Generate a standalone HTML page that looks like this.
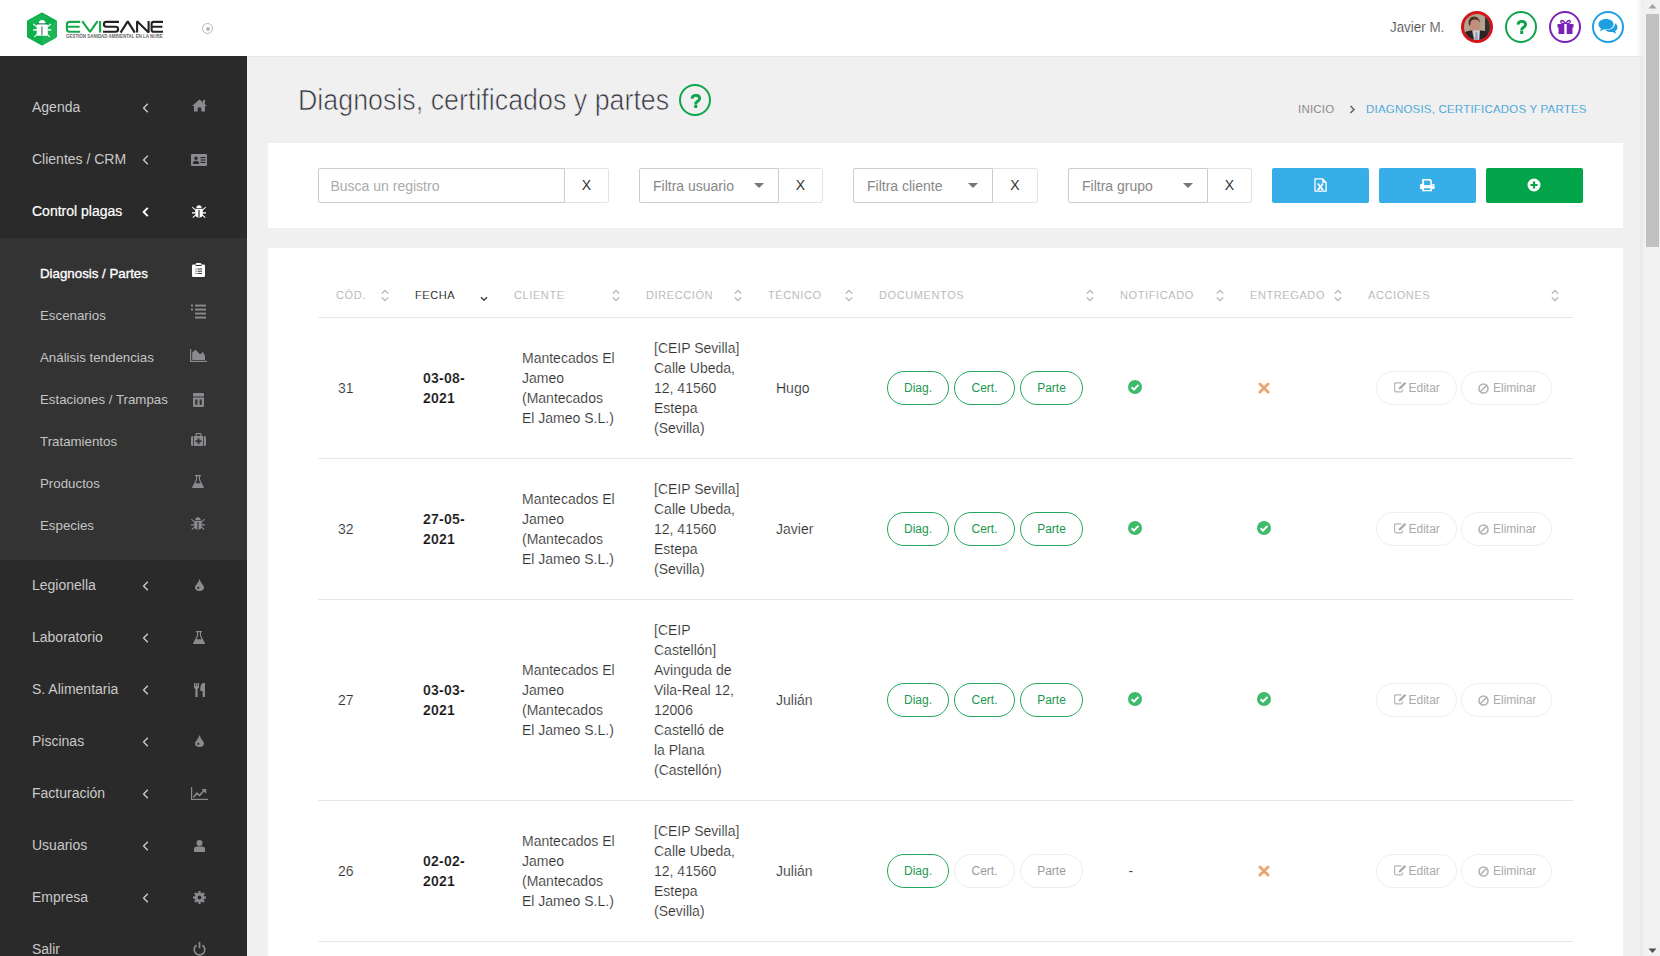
<!DOCTYPE html>
<html><head><meta charset="utf-8">
<style>
*{margin:0;padding:0;box-sizing:border-box}
html,body{width:1660px;height:956px;overflow:hidden;background:#f0f0f0;font-family:"Liberation Sans",sans-serif}
.a{position:absolute}
.nw{white-space:nowrap}
#header{position:absolute;left:0;top:0;width:1643px;height:56px;background:#fff}
#sidebar{position:absolute;left:0;top:56px;width:247px;height:900px;background:#2a2a2a}
#sub{position:absolute;left:0;top:182px;width:247px;height:322px;background:#333}
.mi{position:absolute;left:32px;height:52px;line-height:53px;font-size:14px;color:#c9c9c9;white-space:nowrap}
.mi.act{color:#fff;-webkit-text-stroke:0.2px #fff}
.chev{position:absolute;left:142px;width:8px;height:10px}
.ico{position:absolute;fill:#8b8a8f}
.si{position:absolute;left:40px;height:42px;line-height:44px;font-size:13.3px;color:#c4c4c4;white-space:nowrap}
.si.act{color:#fff;-webkit-text-stroke:0.35px #fff}
.panel{position:absolute;background:#fff}
.inp{position:absolute;top:168px;height:35px;border:1px solid #ccc;border-radius:2px 0 0 2px;background:#fff;font-size:14px;color:#ababab;line-height:35px;white-space:nowrap}
.xb{position:absolute;top:168px;height:35px;border:1px solid #e3e3e3;border-left:none;border-radius:0 3px 3px 0;background:#fff;font-size:14px;color:#333;text-align:center;line-height:33px}
.caret{position:absolute;top:13.5px;width:0;height:0;border-left:5px solid transparent;border-right:5px solid transparent;border-top:5px solid #777}
.btn{position:absolute;top:168px;height:35px;border-radius:2px}
.th{position:absolute;top:288px;font-size:11px;letter-spacing:0.6px;color:#a5a5a5;-webkit-text-stroke:0.2px #fff;white-space:nowrap;line-height:14px}
.sort{position:absolute;top:288px;width:8px;height:13px}
.hl{position:absolute;left:318px;width:1255px;height:1px;background:#e6e6e6}
.td{position:absolute;font-size:14px;line-height:20px;color:#333;white-space:nowrap;-webkit-text-stroke:0.15px #fff}
.addr{letter-spacing:0px}
.b{font-weight:bold;color:#111;-webkit-text-stroke:0.2px #fff;letter-spacing:0.25px}
.dbtn{position:absolute;height:34px;border:1.5px solid #22a85a;border-radius:17px;font-size:12px;color:#1a9a50;text-align:center;line-height:33px;background:#fff}
.dbtn.off{border:1px solid #ececec;color:#9a9a9a;line-height:33px}
.abtn{position:absolute;height:34px;border:1px solid #efefef;border-radius:17px;font-size:12px;color:#aaa;line-height:32px;white-space:nowrap}
</style></head><body>

<!-- HEADER -->
<div id="header">
  <!-- logo -->
  <svg class="a" style="left:26px;top:12px" width="32" height="34" viewBox="0 0 32 34">
    <polygon points="16,2 29.5,9.5 29.5,24.5 16,32 2.5,24.5 2.5,9.5" fill="#0fb04c" stroke="#0fb04c" stroke-width="3" stroke-linejoin="round"/>
    <polygon points="16,17 29.5,9.5 31,10 31,24.5 16,33" fill="#2fbd68" opacity="0.45"/>
    <polygon points="2.5,9.5 16,2 22,5.5 9,13 " fill="#1dbb5e" opacity="0.5"/>
    <g fill="#fff">
      <path d="M12.7 11.5 Q12.9 7.9 16.1 7.9 Q19.4 7.9 19.6 11.5 Z"/>
      <rect x="10.7" y="12.2" width="11.1" height="11.6" rx="1.2"/>
      <rect x="7.1" y="17.2" width="4" height="1.4"/>
      <rect x="21.2" y="17.2" width="4" height="1.4"/>
      <path d="M7.6 11.6 L11.4 14.6 L10.8 15.5 L7 12.5 Z"/>
      <path d="M24.6 11.6 L20.8 14.6 L21.4 15.5 L25.2 12.5 Z"/>
      <path d="M8 24.4 L11.3 21.6 L11.9 22.5 L8.7 25.2 Z"/>
      <path d="M24.2 24.4 L20.9 21.6 L20.3 22.5 L23.5 25.2 Z"/>
    </g>
    <rect x="10.7" y="11.5" width="11.1" height="0.8" fill="#333" opacity="0.7"/>
    <rect x="15.1" y="14.3" width="1.6" height="9.1" fill="#7f9d86"/>
  </svg>
  <svg class="a" style="left:60px;top:15px" width="110" height="27" viewBox="60 15 110 27">
    <g fill="none" stroke-width="2.1" stroke-linejoin="bevel">
      <path stroke="#17a84a" d="M80.2 21.9 H69.6 Q66.9 21.9 66.9 24.6 V29 Q66.9 31.7 69.6 31.7 H80.2 M66.9 26.8 H79.6"/>
      <path stroke="#17a84a" d="M82.2 21.2 L90 31.8 L97.6 21.2"/>
      <path stroke="#17a84a" d="M100.1 21 V32.6"/>
      <path stroke="#222" d="M119 21.9 H106.4 Q103.9 21.9 103.9 24.3 Q103.9 26.8 106.4 26.8 H115.6 Q118.1 26.8 118.1 29.2 Q118.1 31.7 115.6 31.7 H103"/>
      <path stroke="#222" d="M120.6 32.6 L127.7 21.4 L134.8 32.6"/>
      <path stroke="#222" d="M137.1 32.6 V21.2 L148.6 32.4 V21"/>
      <path stroke="#222" d="M163 21.9 H153.4 Q151.6 21.9 151.6 24.2 V29.4 Q151.6 31.7 153.4 31.7 H163 M151.6 26.8 H162.4"/>
    </g>
  </svg>
  <div class="a nw" style="left:66px;top:35.1px;font-size:4.9px;line-height:4.9px;color:#666;font-weight:bold;transform:scaleX(0.91);transform-origin:left">GESTIÓN SANIDAD AMBIENTAL EN LA NUBE</div>
  <!-- small toggle circle -->
  <div class="a" style="left:202px;top:23px;width:11px;height:11px;border:1.6px solid #b5b5b5;border-radius:50%"></div>
  <div class="a" style="left:205.5px;top:26.5px;width:4px;height:4px;background:#b5b5b5;border-radius:50%"></div>

  <div class="a nw" style="left:1390px;top:17px;font-size:14px;line-height:20px;color:#444;-webkit-text-stroke:0.2px #fff;transform:scaleX(0.955);transform-origin:left">Javier M.</div>
  <!-- avatar -->
  <div class="a" style="left:1461px;top:11px;width:32px;height:32px;border-radius:50%;background:#d3151b"></div>
  <svg class="a" style="left:1464px;top:14px" width="26" height="26" viewBox="0 0 26 26">
    <defs><clipPath id="cav"><circle cx="13" cy="13" r="13"/></clipPath></defs>
    <g clip-path="url(#cav)">
      <rect width="26" height="26" fill="#b3a48d"/>
      <rect x="21" y="2" width="5" height="24" fill="#35302f"/>
      <ellipse cx="10.5" cy="11.5" rx="5.2" ry="6.8" fill="#c58d7f"/>
      <path d="M4.5 10 Q4.5 2 10.5 2.5 Q15.5 3 16 9 L14.5 6.5 Q11 4.5 7 7 L6 12 Z" fill="#4e3328"/>
      <path d="M0 26 V19 Q3 16 8 16.5 L10 26 Z" fill="#2c2222"/>
      <path d="M15.5 16.5 Q20 16 23 18 L26 26 H15 Z" fill="#2c2222"/>
      <path d="M9 16.5 L10.5 26 H15.2 L15.8 16.5 Z" fill="#d0d3da"/>
      <path d="M11.6 18 L13.2 18 L13.8 26 H11 Z" fill="#8d9cb8"/>
    </g>
  </svg>
  <!-- help -->
  <div class="a" style="left:1505px;top:11px;width:32px;height:32px;border:2px solid #0da44a;border-radius:50%"></div>
  <svg class="a" style="left:1516px;top:20px" width="11" height="14" viewBox="0 0 11 14"><path d="M2 4.7 C2.3 2.2 3.8 1.4 5.8 1.4 C8.1 1.4 9.6 2.6 9.6 4.5 C9.6 6.3 8.2 7 7 7.8 C6.1 8.4 5.7 9 5.7 10.2" fill="none" stroke="#0da44a" stroke-width="2.9"/><rect x="4.25" y="10.6" width="2.95" height="3.4" fill="#0da44a"/></svg>
  <!-- gift -->
  <div class="a" style="left:1549px;top:11px;width:32px;height:32px;border:2px solid #7a22b8;border-radius:50%"></div>
  <svg class="a" style="left:1557px;top:19px" width="17" height="16" viewBox="0 0 17 16">
    <g fill="#7a22b8">
      <rect x="0.5" y="5" width="16" height="3.5"/>
      <rect x="1.5" y="8" width="14" height="7"/>
      <path d="M8.5 5 C6 0 3 1 4 3.5 C4.5 4.5 6 5 8.5 5 Z M8.5 5 C11 0 14 1 13 3.5 C12.5 4.5 11 5 8.5 5 Z" fill="none" stroke="#7a22b8" stroke-width="1.4"/>
    </g>
    <rect x="7.3" y="5" width="2.4" height="10" fill="#fff"/>
  </svg>
  <!-- chat -->
  <div class="a" style="left:1592px;top:11px;width:32px;height:32px;border:2px solid #1e9fe0;border-radius:50%"></div>
  <svg class="a" style="left:1598px;top:18px" width="20" height="18" viewBox="0 0 20 18">
    <path d="M8 1 C12.5 1 15.5 3.3 15.5 6.3 C15.5 9.3 12.5 11.6 8 11.6 C7 11.6 6.2 11.5 5.5 11.3 L2 13.5 L3 10.5 C1.3 9.5 0.5 8 0.5 6.3 C0.5 3.3 3.5 1 8 1 Z" fill="#1e9fe0"/>
    <path d="M16.8 5.2 C18.6 6.2 19.5 7.6 19.5 9.2 C19.5 10.8 18.7 12.1 17.2 13 L18 15.8 L14.8 13.9 C14.1 14.1 13.5 14.1 12.8 14.1 C10.5 14.1 8.7 13.4 7.5 12.3 C12.8 12.3 16.8 9.5 16.8 6.3 Z" fill="#1e9fe0"/>
  </svg>
</div>
<!-- header shadow near scrollbar -->
<div class="a" style="left:1636px;top:0;width:7px;height:56px;background:linear-gradient(to right,rgba(240,240,240,0),#ededed)"></div>

<div class="a" style="left:247px;top:56px;width:1396px;height:1px;background:#e7e7e7"></div>
<!-- SIDEBAR -->
<div id="sidebar"></div>
<div class="a" style="left:0;top:238px;width:247px;height:322px;background:#333"></div>

<div id="menu"><div class="mi" style="top:81px">Agenda</div>
<svg class="a" style="left:142px;top:102.7px" width="7" height="10" viewBox="0 0 7 10"><path d="M5.8 0.8 L1.6 5 L5.8 9.2" fill="none" stroke="#c9c9c9" stroke-width="1.4"/></svg>
<svg class="a" style="left:191.5px;top:99.0px" width="15" height="13" viewBox="0 0 15 13" fill="#8b8a8f"><path d="M7.5 0.5 L15 7 L13 7 L13 12.5 L9.3 12.5 L9.3 8.5 L5.7 8.5 L5.7 12.5 L2 12.5 L2 7 L0 7 Z"/><rect x="11" y="1" width="2" height="3.5"/></svg>
<div class="mi" style="top:133px">Clientes / CRM</div>
<svg class="a" style="left:142px;top:154.7px" width="7" height="10" viewBox="0 0 7 10"><path d="M5.8 0.8 L1.6 5 L5.8 9.2" fill="none" stroke="#c9c9c9" stroke-width="1.4"/></svg>
<svg class="a" style="left:191.0px;top:154.0px" width="16" height="12" viewBox="0 0 16 12" fill="#8b8a8f"><path d="M1 0 H15 Q16 0 16 1 V11 Q16 12 15 12 H1 Q0 12 0 11 V1 Q0 0 1 0 Z"/><g fill="#2a2a2a"><circle cx="5" cy="4.3" r="1.8"/><path d="M1.8 10 Q1.8 6.8 5 6.8 Q8.2 6.8 8.2 10 Z"/><rect x="9.5" y="3" width="5" height="1.2"/><rect x="9.5" y="5.4" width="5" height="1.2"/><rect x="9.5" y="7.8" width="5" height="1.2"/></g></svg>
<div class="mi act" style="top:185px">Control plagas</div>
<svg class="a" style="left:142px;top:206.7px" width="7" height="10" viewBox="0 0 7 10"><path d="M5.8 0.8 L1.6 5 L5.8 9.2" fill="none" stroke="#fff" stroke-width="1.9"/></svg>
<svg class="a" style="left:192.0px;top:204.5px" width="14" height="13" viewBox="0 0 14 13" fill="#fff"><path d="M4.3 3 Q4.5 0.3 7 0.3 Q9.5 0.3 9.7 3 Z"/><path d="M3.2 3.8 H10.8 V9 Q10.8 12.6 7 12.6 Q3.2 12.6 3.2 9 Z"/><path d="M0.6 1.8 L3.6 4.4 L3 5.2 L0 2.6 Z M13.4 1.8 L10.4 4.4 L11 5.2 L14 2.6 Z"/><rect x="0" y="7.2" width="3.4" height="1.3"/><rect x="10.6" y="7.2" width="3.4" height="1.3"/><path d="M0.4 12.2 L3.4 9.6 L4 10.4 L1 13 Z M13.6 12.2 L10.6 9.6 L10 10.4 L13 13 Z"/><rect x="6.4" y="5" width="1.2" height="7" fill="#2a2a2a"/></svg>
<div class="mi" style="top:559px">Legionella</div>
<svg class="a" style="left:142px;top:580.7px" width="7" height="10" viewBox="0 0 7 10"><path d="M5.8 0.8 L1.6 5 L5.8 9.2" fill="none" stroke="#c9c9c9" stroke-width="1.4"/></svg>
<svg class="a" style="left:194.5px;top:579.0px" width="9" height="12" viewBox="0 0 9 12" fill="#8b8a8f"><path d="M4.5 0 Q5.5 3 7.5 5.5 Q9 7.3 9 8.2 Q9 12 4.5 12 Q0 12 0 8.2 Q0 7.3 1.5 5.5 Q3.5 3 4.5 0 Z"/><circle cx="3.3" cy="8.8" r="1.1" fill="#2a2a2a"/></svg>
<div class="mi" style="top:611px">Laboratorio</div>
<svg class="a" style="left:142px;top:632.7px" width="7" height="10" viewBox="0 0 7 10"><path d="M5.8 0.8 L1.6 5 L5.8 9.2" fill="none" stroke="#c9c9c9" stroke-width="1.4"/></svg>
<svg class="a" style="left:193.0px;top:630.5px" width="12" height="13" viewBox="0 0 12 13" fill="#8b8a8f"><rect x="3" y="0" width="6" height="1.3"/><path d="M4 1 H8 V4.5 L12 12.5 Q12 13 11.5 13 H0.5 Q0 13 0 12.5 L4 4.5 Z"/><path d="M5.1 1.3 H6.9 V4.8 L8.6 8.2 H3.4 L5.1 4.8 Z" fill="#2a2a2a"/></svg>
<div class="mi" style="top:663px">S. Alimentaria</div>
<svg class="a" style="left:142px;top:684.7px" width="7" height="10" viewBox="0 0 7 10"><path d="M5.8 0.8 L1.6 5 L5.8 9.2" fill="none" stroke="#c9c9c9" stroke-width="1.4"/></svg>
<svg class="a" style="left:193.5px;top:683.0px" width="11" height="14" viewBox="0 0 11 14" fill="#8b8a8f"><path d="M0 0 H5 V4 Q5 5.5 3.6 6 V14 H1.4 V6 Q0 5.5 0 4 Z"/><path d="M6.3 6 Q6.3 1 9 0 H11 V14 H8.6 V8 H6.3 Z"/><g fill="#2a2a2a"><rect x="1.5" y="0" width="0.6" height="3"/><rect x="2.9" y="0" width="0.6" height="3"/></g></svg>
<div class="mi" style="top:715px">Piscinas</div>
<svg class="a" style="left:142px;top:736.7px" width="7" height="10" viewBox="0 0 7 10"><path d="M5.8 0.8 L1.6 5 L5.8 9.2" fill="none" stroke="#c9c9c9" stroke-width="1.4"/></svg>
<svg class="a" style="left:194.5px;top:735.0px" width="9" height="12" viewBox="0 0 9 12" fill="#8b8a8f"><path d="M4.5 0 Q5.5 3 7.5 5.5 Q9 7.3 9 8.2 Q9 12 4.5 12 Q0 12 0 8.2 Q0 7.3 1.5 5.5 Q3.5 3 4.5 0 Z"/><circle cx="3.3" cy="8.8" r="1.1" fill="#2a2a2a"/></svg>
<div class="mi" style="top:767px">Facturación</div>
<svg class="a" style="left:142px;top:788.7px" width="7" height="10" viewBox="0 0 7 10"><path d="M5.8 0.8 L1.6 5 L5.8 9.2" fill="none" stroke="#c9c9c9" stroke-width="1.4"/></svg>
<svg class="a" style="left:190.5px;top:786.5px" width="17" height="13" viewBox="0 0 17 13" fill="#8b8a8f"><rect x="0" y="0" width="1.2" height="13"/><rect x="0" y="11.8" width="17" height="1.2"/><path d="M2.5 10.2 L6 6.2 L8.5 8.5 L13 3.5" fill="none" stroke="#8b8a8f" stroke-width="1.6"/><path d="M10.5 2 H15.2 V6.7 Z"/></svg>
<div class="mi" style="top:819px">Usuarios</div>
<svg class="a" style="left:142px;top:840.7px" width="7" height="10" viewBox="0 0 7 10"><path d="M5.8 0.8 L1.6 5 L5.8 9.2" fill="none" stroke="#c9c9c9" stroke-width="1.4"/></svg>
<svg class="a" style="left:193.5px;top:840.0px" width="11" height="12" viewBox="0 0 11 12" fill="#8b8a8f"><circle cx="5.5" cy="3" r="3"/><path d="M0 12 V9 Q0 6.5 2.8 6.5 H8.2 Q11 6.5 11 9 V12 Z"/></svg>
<div class="mi" style="top:871px">Empresa</div>
<svg class="a" style="left:142px;top:892.7px" width="7" height="10" viewBox="0 0 7 10"><path d="M5.8 0.8 L1.6 5 L5.8 9.2" fill="none" stroke="#c9c9c9" stroke-width="1.4"/></svg>
<svg class="a" style="left:192.5px;top:890.5px" width="13" height="13" viewBox="0 0 13 13" fill="#8b8a8f"><circle cx="6.5" cy="6.5" r="4.8"/><rect x="5.4" y="0" width="2.2" height="3" transform="rotate(0 6.5 6.5)"/><rect x="5.4" y="0" width="2.2" height="3" transform="rotate(45 6.5 6.5)"/><rect x="5.4" y="0" width="2.2" height="3" transform="rotate(90 6.5 6.5)"/><rect x="5.4" y="0" width="2.2" height="3" transform="rotate(135 6.5 6.5)"/><rect x="5.4" y="0" width="2.2" height="3" transform="rotate(180 6.5 6.5)"/><rect x="5.4" y="0" width="2.2" height="3" transform="rotate(225 6.5 6.5)"/><rect x="5.4" y="0" width="2.2" height="3" transform="rotate(270 6.5 6.5)"/><rect x="5.4" y="0" width="2.2" height="3" transform="rotate(315 6.5 6.5)"/><circle cx="6.5" cy="6.5" r="1.9" fill="#2a2a2a"/></svg>
<div class="mi" style="top:923px">Salir</div>
<svg class="a" style="left:192.5px;top:942.0px" width="13" height="14" viewBox="0 0 13 14" fill="#8b8a8f"><path d="M3.6 3.2 A5.3 5.3 0 1 0 9.4 3.2" fill="none" stroke="#8b8a8f" stroke-width="1.7"/><rect x="5.65" y="0" width="1.7" height="6.3"/></svg>
<div class="si act" style="top:252px">Diagnosis / Partes</div>
<svg class="a" style="left:191.5px;top:262.9px" width="13" height="14" viewBox="0 0 13 14" fill="#fff"><rect x="0" y="1.5" width="13" height="12.5" rx="1.3"/><rect x="3.8" y="0" width="5.4" height="2.8" rx="1" fill="#fff"/><g fill="#333"><rect x="3.5" y="1.9" width="6" height="1.1"/><rect x="3.5" y="5.5" width="1" height="1"/><rect x="5.5" y="5.5" width="4.5" height="1"/><rect x="3.5" y="7.7" width="1" height="1"/><rect x="5.5" y="7.7" width="4.5" height="1"/><rect x="3.5" y="9.9" width="1" height="1"/><rect x="5.5" y="9.9" width="4.5" height="1"/></g></svg>
<div class="si" style="top:294px">Escenarios</div>
<svg class="a" style="left:190.5px;top:304.0px" width="15" height="15" viewBox="0 0 15 15" fill="#8b8a8f"><rect x="0" y="0.5" width="2" height="2"/><rect x="0" y="4.5" width="2" height="2"/><rect x="4" y="0.6" width="11" height="1.9"/><rect x="4" y="4.6" width="11" height="1.9"/><rect x="4" y="8.6" width="11" height="1.9"/><rect x="4" y="12.6" width="11" height="1.9"/></svg>
<div class="si" style="top:336px">Análisis tendencias</div>
<svg class="a" style="left:189.5px;top:349.0px" width="17" height="13" viewBox="0 0 17 13" fill="#8b8a8f"><rect x="0" y="0" width="1.2" height="13"/><rect x="0" y="11.8" width="17" height="1.2"/><path d="M2.2 11 V3.5 L5.5 0.8 L10 5.2 L13 3 L15 7 V11 Z"/></svg>
<div class="si" style="top:378px">Estaciones / Trampas</div>
<svg class="a" style="left:192.5px;top:392.9px" width="11" height="14" viewBox="0 0 11 14" fill="#8b8a8f"><rect x="0" y="0" width="11" height="3.4" rx="1"/><path d="M0 4.5 H11 V13 Q11 14 10 14 H1 Q0 14 0 13 Z"/><g fill="#333"><rect x="2.2" y="6.5" width="2.2" height="5.3"/><rect x="6.6" y="6.5" width="2.2" height="5.3"/></g></svg>
<div class="si" style="top:420px">Tratamientos</div>
<svg class="a" style="left:190.5px;top:433.0px" width="15" height="13" viewBox="0 0 15 13" fill="#8b8a8f"><path d="M4.5 3 V1.2 Q4.5 0 5.7 0 H9.3 Q10.5 0 10.5 1.2 V3 H9.3 V1.2 H5.7 V3 Z"/><path d="M1.5 3 H13.5 Q15 3 15 4.5 V11.5 Q15 13 13.5 13 H1.5 Q0 13 0 11.5 V4.5 Q0 3 1.5 3 Z"/><g fill="#333"><rect x="2.2" y="3" width="0.8" height="10"/><rect x="12" y="3" width="0.8" height="10"/><rect x="6.6" y="5.2" width="1.8" height="6"/><rect x="4.5" y="7.3" width="6" height="1.8"/></g></svg>
<div class="si" style="top:462px">Productos</div>
<svg class="a" style="left:192.0px;top:475.0px" width="12" height="13" viewBox="0 0 12 13" fill="#8b8a8f"><rect x="3" y="0" width="6" height="1.3"/><path d="M4 1 H8 V4.5 L12 12.5 Q12 13 11.5 13 H0.5 Q0 13 0 12.5 L4 4.5 Z"/><path d="M5.1 1.3 H6.9 V4.8 L8.6 8.2 H3.4 L5.1 4.8 Z" fill="#333"/></svg>
<div class="si" style="top:504px">Especies</div>
<svg class="a" style="left:191.0px;top:516.5px" width="14" height="13" viewBox="0 0 14 13" fill="#8b8a8f"><path d="M4.3 3 Q4.5 0.3 7 0.3 Q9.5 0.3 9.7 3 Z"/><path d="M3.2 3.8 H10.8 V9 Q10.8 12.6 7 12.6 Q3.2 12.6 3.2 9 Z"/><path d="M0.6 1.8 L3.6 4.4 L3 5.2 L0 2.6 Z M13.4 1.8 L10.4 4.4 L11 5.2 L14 2.6 Z"/><rect x="0" y="7.2" width="3.4" height="1.3"/><rect x="10.6" y="7.2" width="3.4" height="1.3"/><path d="M0.4 12.2 L3.4 9.6 L4 10.4 L1 13 Z M13.6 12.2 L10.6 9.6 L10 10.4 L13 13 Z"/><rect x="6.4" y="5" width="1.2" height="7" fill="#333"/></svg></div><!--/menu-->

<!-- PAGE TITLE -->
<div class="a nw" style="left:298px;top:80px;font-size:30px;line-height:40px;color:#33333f;-webkit-text-stroke:0.7px #f0f0f0;transform:scaleX(0.894);transform-origin:left">Diagnosis, certificados y partes</div>
<div class="a" style="left:679px;top:84px;width:32px;height:32px;border:2px solid #0da44a;border-radius:50%"></div>
<svg class="a" style="left:690px;top:94px" width="11" height="14" viewBox="0 0 11 14"><path d="M2 4.7 C2.3 2.2 3.8 1.4 5.8 1.4 C8.1 1.4 9.6 2.6 9.6 4.5 C9.6 6.3 8.2 7 7 7.8 C6.1 8.4 5.7 9 5.7 10.2" fill="none" stroke="#0da44a" stroke-width="2.9"/><rect x="4.25" y="10.6" width="2.95" height="3.4" fill="#0da44a"/></svg>

<div class="a nw" style="left:1298px;top:102px;font-size:11.5px;letter-spacing:0.2px;line-height:14px;color:#777;-webkit-text-stroke:0.15px #f0f0f0">INICIO</div>
<svg class="a" style="left:1349px;top:105px" width="7" height="9" viewBox="0 0 7 9"><path d="M1.5 1 L5 4.5 L1.5 8" fill="none" stroke="#666" stroke-width="1.6"/></svg>
<div class="a nw" style="left:1366px;top:102px;font-size:11.5px;letter-spacing:0.2px;line-height:14px;color:#2a9ad6;-webkit-text-stroke:0.15px #f0f0f0">DIAGNOSIS, CERTIFICADOS Y PARTES</div>

<!-- FILTER PANEL -->
<div class="panel" style="left:268px;top:143px;width:1355px;height:85px"></div>
<div class="inp" style="left:318px;width:247px;padding-left:11.5px">Busca un registro</div>
<div class="xb" style="left:565px;width:44px">X</div>

<div class="inp" style="left:639px;width:140px;padding-left:13px;color:#888">Filtra usuario<div class="caret" style="left:114px"></div></div>
<div class="xb" style="left:779px;width:44px">X</div>
<div class="inp" style="left:853px;width:140px;padding-left:13px;color:#888">Filtra cliente<div class="caret" style="left:114px"></div></div>
<div class="xb" style="left:993px;width:45px">X</div>
<div class="inp" style="left:1068px;width:140px;padding-left:13px;color:#888">Filtra grupo<div class="caret" style="left:114px"></div></div>
<div class="xb" style="left:1208px;width:44px">X</div>

<div class="btn" style="left:1272px;width:97px;background:#38aee8"></div>
<div class="btn" style="left:1379px;width:97px;background:#38aee8"></div>
<div class="btn" style="left:1486px;width:97px;background:#02a54a"></div>
<!-- excel icon -->
<svg class="a" style="left:1314px;top:178px" width="13" height="14" viewBox="0 0 13 14">
  <path d="M1 0.9 H8.6 L12.1 4.4 V13.1 H1 Z" fill="none" stroke="#fff" stroke-width="1.3"/>
  <path d="M8.2 0.6 V4.8 H12.4 Z" fill="#fff"/>
  <path d="M4.2 6.3 L8.6 11.4 M8.6 6.3 L4.2 11.4" stroke="#fff" stroke-width="1.7"/>
  <path d="M3 6 H5.6 M7.3 6 H9.8 M3 11.6 H5.6 M7.3 11.6 H9.8" stroke="#fff" stroke-width="0.9"/>
</svg>
<!-- print icon -->
<svg class="a" style="left:1420px;top:179px" width="15" height="13" viewBox="0 0 15 13">
  <path fill-rule="evenodd" fill="#fff" d="M2.2 0 H10.2 L12 1.8 V4.9 H13.5 Q14.5 4.9 14.5 5.9 V10.1 H12 V12.2 H2.2 V10.1 H0 V5.9 Q0 4.9 1 4.9 H2.2 Z M4.1 1.4 V5.9 H10.3 V2.6 L9.1 1.4 Z M4.1 9.2 V10.9 H10.3 V9.2 Z"/>
  <circle cx="12.4" cy="6.3" r="0.55" fill="#38aee8"/>
</svg>
<!-- plus circle -->
<svg class="a" style="left:1527px;top:178px" width="14" height="14" viewBox="0 0 14 14">
  <circle cx="7" cy="7" r="6.5" fill="#fff"/>
  <path d="M7 3.5 V10.5 M3.5 7 H10.5" stroke="#02a54a" stroke-width="2.2"/>
</svg>

<!-- TABLE PANEL -->
<div class="panel" style="left:268px;top:248px;width:1355px;height:708px"></div>

<div id="tbody"><div class="th" style="left:336px;">CÓD.</div>
<svg class="a" style="left:381px;top:289px" width="8" height="13" viewBox="0 0 8 13"><path d="M0.8 4.6 L4 1.4 L7.2 4.6 M0.8 8.4 L4 11.6 L7.2 8.4" fill="none" stroke="#b3b3b3" stroke-width="1.3"/></svg>
<div class="th" style="left:415px;color:#000;-webkit-text-stroke:0.15px #fff">FECHA</div>
<svg class="a" style="left:480px;top:296px" width="8" height="6" viewBox="0 0 8 6"><path d="M1 1.2 L4 4.2 L7 1.2" fill="none" stroke="#444" stroke-width="1.6"/></svg>
<div class="th" style="left:514px;">CLIENTE</div>
<svg class="a" style="left:612px;top:289px" width="8" height="13" viewBox="0 0 8 13"><path d="M0.8 4.6 L4 1.4 L7.2 4.6 M0.8 8.4 L4 11.6 L7.2 8.4" fill="none" stroke="#b3b3b3" stroke-width="1.3"/></svg>
<div class="th" style="left:646px;">DIRECCIÓN</div>
<svg class="a" style="left:734px;top:289px" width="8" height="13" viewBox="0 0 8 13"><path d="M0.8 4.6 L4 1.4 L7.2 4.6 M0.8 8.4 L4 11.6 L7.2 8.4" fill="none" stroke="#b3b3b3" stroke-width="1.3"/></svg>
<div class="th" style="left:768px;">TÉCNICO</div>
<svg class="a" style="left:845px;top:289px" width="8" height="13" viewBox="0 0 8 13"><path d="M0.8 4.6 L4 1.4 L7.2 4.6 M0.8 8.4 L4 11.6 L7.2 8.4" fill="none" stroke="#b3b3b3" stroke-width="1.3"/></svg>
<div class="th" style="left:879px;">DOCUMENTOS</div>
<svg class="a" style="left:1086px;top:289px" width="8" height="13" viewBox="0 0 8 13"><path d="M0.8 4.6 L4 1.4 L7.2 4.6 M0.8 8.4 L4 11.6 L7.2 8.4" fill="none" stroke="#b3b3b3" stroke-width="1.3"/></svg>
<div class="th" style="left:1120px;">NOTIFICADO</div>
<svg class="a" style="left:1216px;top:289px" width="8" height="13" viewBox="0 0 8 13"><path d="M0.8 4.6 L4 1.4 L7.2 4.6 M0.8 8.4 L4 11.6 L7.2 8.4" fill="none" stroke="#b3b3b3" stroke-width="1.3"/></svg>
<div class="th" style="left:1250px;">ENTREGADO</div>
<svg class="a" style="left:1334px;top:289px" width="8" height="13" viewBox="0 0 8 13"><path d="M0.8 4.6 L4 1.4 L7.2 4.6 M0.8 8.4 L4 11.6 L7.2 8.4" fill="none" stroke="#b3b3b3" stroke-width="1.3"/></svg>
<div class="th" style="left:1368px;">ACCIONES</div>
<svg class="a" style="left:1551px;top:289px" width="8" height="13" viewBox="0 0 8 13"><path d="M0.8 4.6 L4 1.4 L7.2 4.6 M0.8 8.4 L4 11.6 L7.2 8.4" fill="none" stroke="#b3b3b3" stroke-width="1.3"/></svg>
<div class="hl" style="top:317px"></div>
<div class="td" style="left:338px;top:378px">31</div>
<div class="td b" style="left:423px;top:368px">03-08-<br>2021</div>
<div class="td" style="left:522px;top:348px">Mantecados El<br>Jameo<br>(Mantecados<br>El Jameo S.L.)</div>
<div class="td addr" style="left:654px;top:338px">[CEIP Sevilla]<br>Calle Ubeda,<br>12, 41560<br>Estepa<br>(Sevilla)</div>
<div class="td" style="left:776px;top:378px">Hugo</div>
<div class="dbtn" style="left:887px;top:371px;width:62px">Diag.</div>
<div class="dbtn" style="left:954px;top:371px;width:61px">Cert.</div>
<div class="dbtn" style="left:1020px;top:371px;width:63px">Parte</div>
<svg class="a" style="left:1128px;top:380px" width="14" height="14" viewBox="0 0 14 14"><circle cx="7" cy="7" r="7" fill="#3dba6a"/><path d="M3.6 7.2 L6 9.5 L10.5 4.9" fill="none" stroke="#fff" stroke-width="2"/></svg>
<svg class="a" style="left:1258px;top:382px" width="12" height="12" viewBox="0 0 12 12"><path d="M2 2 L10 10 M10 2 L2 10" stroke="#eaa773" stroke-width="3" stroke-linecap="round"/></svg>
<div class="abtn" style="left:1376px;top:371px;width:81px"><svg class="a" style="left:16px;top:9px" width="14" height="12" viewBox="0 0 14 12"><path d="M8.5 1.8 H2.8 Q1.6 1.8 1.6 3 V9.6 Q1.6 10.8 2.8 10.8 H8.4 Q9.6 10.8 9.6 9.6 V8.4" fill="none" stroke="#b5b5b5" stroke-width="1.2"/><path d="M5.6 8.6 L6 6.4 L11.6 0.9 L13.3 2.6 L7.8 8.1 Z" fill="#aaa"/></svg><span class="a" style="left:31.5px;top:0">Editar</span></div>
<div class="abtn" style="left:1461px;top:371px;width:91px"><svg class="a" style="left:16px;top:11px" width="11" height="11" viewBox="0 0 11 11"><circle cx="5.5" cy="5.5" r="4.5" fill="none" stroke="#b3b3b3" stroke-width="1.6"/><path d="M2.3 8.7 L8.7 2.3" stroke="#b3b3b3" stroke-width="1.6"/></svg><span class="a" style="left:31px;top:0">Eliminar</span></div>
<div class="hl" style="top:458px"></div>
<div class="td" style="left:338px;top:519px">32</div>
<div class="td b" style="left:423px;top:509px">27-05-<br>2021</div>
<div class="td" style="left:522px;top:489px">Mantecados El<br>Jameo<br>(Mantecados<br>El Jameo S.L.)</div>
<div class="td addr" style="left:654px;top:479px">[CEIP Sevilla]<br>Calle Ubeda,<br>12, 41560<br>Estepa<br>(Sevilla)</div>
<div class="td" style="left:776px;top:519px">Javier</div>
<div class="dbtn" style="left:887px;top:512px;width:62px">Diag.</div>
<div class="dbtn" style="left:954px;top:512px;width:61px">Cert.</div>
<div class="dbtn" style="left:1020px;top:512px;width:63px">Parte</div>
<svg class="a" style="left:1128px;top:521px" width="14" height="14" viewBox="0 0 14 14"><circle cx="7" cy="7" r="7" fill="#3dba6a"/><path d="M3.6 7.2 L6 9.5 L10.5 4.9" fill="none" stroke="#fff" stroke-width="2"/></svg>
<svg class="a" style="left:1257px;top:521px" width="14" height="14" viewBox="0 0 14 14"><circle cx="7" cy="7" r="7" fill="#3dba6a"/><path d="M3.6 7.2 L6 9.5 L10.5 4.9" fill="none" stroke="#fff" stroke-width="2"/></svg>
<div class="abtn" style="left:1376px;top:512px;width:81px"><svg class="a" style="left:16px;top:9px" width="14" height="12" viewBox="0 0 14 12"><path d="M8.5 1.8 H2.8 Q1.6 1.8 1.6 3 V9.6 Q1.6 10.8 2.8 10.8 H8.4 Q9.6 10.8 9.6 9.6 V8.4" fill="none" stroke="#b5b5b5" stroke-width="1.2"/><path d="M5.6 8.6 L6 6.4 L11.6 0.9 L13.3 2.6 L7.8 8.1 Z" fill="#aaa"/></svg><span class="a" style="left:31.5px;top:0">Editar</span></div>
<div class="abtn" style="left:1461px;top:512px;width:91px"><svg class="a" style="left:16px;top:11px" width="11" height="11" viewBox="0 0 11 11"><circle cx="5.5" cy="5.5" r="4.5" fill="none" stroke="#b3b3b3" stroke-width="1.6"/><path d="M2.3 8.7 L8.7 2.3" stroke="#b3b3b3" stroke-width="1.6"/></svg><span class="a" style="left:31px;top:0">Eliminar</span></div>
<div class="hl" style="top:599px"></div>
<div class="td" style="left:338px;top:690px">27</div>
<div class="td b" style="left:423px;top:680px">03-03-<br>2021</div>
<div class="td" style="left:522px;top:660px">Mantecados El<br>Jameo<br>(Mantecados<br>El Jameo S.L.)</div>
<div class="td addr" style="left:654px;top:620px">[CEIP<br>Castellón]<br>Avinguda de<br>Vila-Real 12,<br>12006<br>Castelló de<br>la Plana<br>(Castellón)</div>
<div class="td" style="left:776px;top:690px">Julián</div>
<div class="dbtn" style="left:887px;top:683px;width:62px">Diag.</div>
<div class="dbtn" style="left:954px;top:683px;width:61px">Cert.</div>
<div class="dbtn" style="left:1020px;top:683px;width:63px">Parte</div>
<svg class="a" style="left:1128px;top:692px" width="14" height="14" viewBox="0 0 14 14"><circle cx="7" cy="7" r="7" fill="#3dba6a"/><path d="M3.6 7.2 L6 9.5 L10.5 4.9" fill="none" stroke="#fff" stroke-width="2"/></svg>
<svg class="a" style="left:1257px;top:692px" width="14" height="14" viewBox="0 0 14 14"><circle cx="7" cy="7" r="7" fill="#3dba6a"/><path d="M3.6 7.2 L6 9.5 L10.5 4.9" fill="none" stroke="#fff" stroke-width="2"/></svg>
<div class="abtn" style="left:1376px;top:683px;width:81px"><svg class="a" style="left:16px;top:9px" width="14" height="12" viewBox="0 0 14 12"><path d="M8.5 1.8 H2.8 Q1.6 1.8 1.6 3 V9.6 Q1.6 10.8 2.8 10.8 H8.4 Q9.6 10.8 9.6 9.6 V8.4" fill="none" stroke="#b5b5b5" stroke-width="1.2"/><path d="M5.6 8.6 L6 6.4 L11.6 0.9 L13.3 2.6 L7.8 8.1 Z" fill="#aaa"/></svg><span class="a" style="left:31.5px;top:0">Editar</span></div>
<div class="abtn" style="left:1461px;top:683px;width:91px"><svg class="a" style="left:16px;top:11px" width="11" height="11" viewBox="0 0 11 11"><circle cx="5.5" cy="5.5" r="4.5" fill="none" stroke="#b3b3b3" stroke-width="1.6"/><path d="M2.3 8.7 L8.7 2.3" stroke="#b3b3b3" stroke-width="1.6"/></svg><span class="a" style="left:31px;top:0">Eliminar</span></div>
<div class="hl" style="top:800px"></div>
<div class="td" style="left:338px;top:861px">26</div>
<div class="td b" style="left:423px;top:851px">02-02-<br>2021</div>
<div class="td" style="left:522px;top:831px">Mantecados El<br>Jameo<br>(Mantecados<br>El Jameo S.L.)</div>
<div class="td addr" style="left:654px;top:821px">[CEIP Sevilla]<br>Calle Ubeda,<br>12, 41560<br>Estepa<br>(Sevilla)</div>
<div class="td" style="left:776px;top:861px">Julián</div>
<div class="dbtn" style="left:887px;top:854px;width:62px">Diag.</div>
<div class="dbtn off" style="left:954px;top:854px;width:61px">Cert.</div>
<div class="dbtn off" style="left:1020px;top:854px;width:63px">Parte</div>
<div class="td" style="left:1128.5px;top:861px;color:#444">-</div>
<svg class="a" style="left:1258px;top:865px" width="12" height="12" viewBox="0 0 12 12"><path d="M2 2 L10 10 M10 2 L2 10" stroke="#eaa773" stroke-width="3" stroke-linecap="round"/></svg>
<div class="abtn" style="left:1376px;top:854px;width:81px"><svg class="a" style="left:16px;top:9px" width="14" height="12" viewBox="0 0 14 12"><path d="M8.5 1.8 H2.8 Q1.6 1.8 1.6 3 V9.6 Q1.6 10.8 2.8 10.8 H8.4 Q9.6 10.8 9.6 9.6 V8.4" fill="none" stroke="#b5b5b5" stroke-width="1.2"/><path d="M5.6 8.6 L6 6.4 L11.6 0.9 L13.3 2.6 L7.8 8.1 Z" fill="#aaa"/></svg><span class="a" style="left:31.5px;top:0">Editar</span></div>
<div class="abtn" style="left:1461px;top:854px;width:91px"><svg class="a" style="left:16px;top:11px" width="11" height="11" viewBox="0 0 11 11"><circle cx="5.5" cy="5.5" r="4.5" fill="none" stroke="#b3b3b3" stroke-width="1.6"/><path d="M2.3 8.7 L8.7 2.3" stroke="#b3b3b3" stroke-width="1.6"/></svg><span class="a" style="left:31px;top:0">Eliminar</span></div>
<div class="hl" style="top:941px"></div></div><!--/tbody-->

<!-- scrollbar -->
<div class="a" style="left:1640px;top:56px;width:3.5px;height:900px;background:#e9e9e9"></div>
<div class="a" style="left:1643px;top:0;width:17px;height:956px;background:#f1f1f1"></div>
<div class="a" style="left:1646px;top:14px;width:13px;height:233px;background:#c1c1c1"></div>
<svg class="a" style="left:1648px;top:3px" width="9" height="6"><path d="M0.5 5.5 L4.5 1 L8.5 5.5 Z" fill="#a3a3a3"/></svg>
<svg class="a" style="left:1648px;top:947.5px" width="9" height="6"><path d="M0.5 0.5 L4.5 5 L8.5 0.5 Z" fill="#505050"/></svg>

</body></html>
